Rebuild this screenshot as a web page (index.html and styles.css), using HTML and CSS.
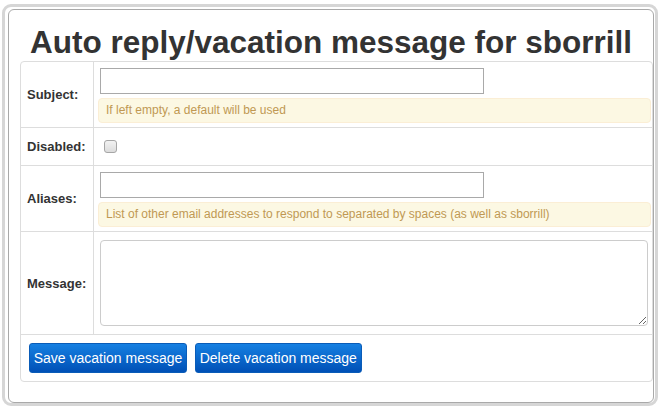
FILE: index.html
```html
<!DOCTYPE html>
<html>
<head>
<meta charset="utf-8">
<title>Auto reply/vacation message</title>
<link rel="stylesheet" href="styles.css">
</head>
<body>
<div class="frame">
  <div class="panel">
    <h1 class="title">Auto reply/vacation message for sborrill</h1>
    <table class="form">
      <tr>
        <td class="label">Subject:</td>
        <td class="field">
          <input type="text" class="text">
          <div class="help">If left empty, a default will be used</div>
        </td>
      </tr>
      <tr>
        <td class="label sep">Disabled:</td>
        <td class="field sep check"><input type="checkbox" class="box"></td>
      </tr>
      <tr>
        <td class="label sep">Aliases:</td>
        <td class="field sep">
          <input type="text" class="text">
          <div class="help">List of other email addresses to respond to separated by spaces (as well as sborrill)</div>
        </td>
      </tr>
      <tr>
        <td class="label sep">Message:</td>
        <td class="field sep msg"><textarea class="area"></textarea></td>
      </tr>
      <tr>
        <td colspan="2" class="actions sep">
          <button class="btn">Save vacation message</button>
          <button class="btn">Delete vacation message</button>
        </td>
      </tr>
    </table>
  </div>
</div>
</body>
</html>
```

FILE: styles.css
```css
html, body {
  margin: 0;
  padding: 0;
  background: #fff;
}
body {
  font-family: "Liberation Sans", Arial, sans-serif;
  color: #333;
}
.frame {
  box-sizing: border-box;
  margin: 4px 0 0 2px;
  width: 656px;
  height: 402px;
  border: 3px solid #d6d6d6;
  border-radius: 9px;
  padding: 2px 1px 0 3px;
}
.panel {
  box-sizing: border-box;
  width: 646px;
  height: 394px;
  border: 1px solid #a9a9a9;
  border-radius: 6px;
  padding-top: 14px;
}
.title {
  margin: 0;
  font-size: 31.5px;
  line-height: 37px;
  font-weight: bold;
  text-align: center;
  color: #333;
}
.form {
  margin-left: 11px;
  width: 633px;
  border-collapse: separate;
  border-spacing: 0;
  border: 1px solid #ddd;
  border-radius: 4px;
}
.form td {
  padding: 0;
}
.form td.sep {
  border-top: 1px solid #ddd;
}
.form td.label {
  box-sizing: border-box;
  width: 73px;
  padding-left: 6px;
  border-right: 1px solid #ddd;
  font-size: 13px;
  font-weight: bold;
  color: #333;
  vertical-align: middle;
}
.form td.field {
  padding: 6px 1px 4px 4px;
  vertical-align: top;
}
.form td.check {
  padding: 12px 4px 12px 4px;
}
.form td.msg {
  padding: 8px 4px 8px 4px;
}
.text {
  display: block;
  box-sizing: border-box;
  width: 384px;
  height: 26px;
  margin: 0 0 0 2px;
  border: 1px solid #a9a9a9;
  border-radius: 0;
  padding: 2px 4px;
  font-family: inherit;
  font-size: 13px;
}
.help {
  margin-top: 4px;
  border: 1px solid #fbeed5;
  border-radius: 4px;
  background: #fcf8e3;
  color: #c09853;
  font-size: 12px;
  line-height: 15px;
  padding: 4px 7px;
}
.box {
  -webkit-appearance: none;
  appearance: none;
  display: block;
  box-sizing: border-box;
  width: 13px;
  height: 13px;
  margin: 0 0 0 6px;
  border: 1px solid #a6a6a6;
  border-radius: 3px;
  background: linear-gradient(#f2f2f2, #dcdcdc);
}
.area {
  display: block;
  box-sizing: border-box;
  width: 548px;
  height: 86px;
  margin: 0 0 0 2px;
  border: 1px solid #ccc;
  border-radius: 4px;
  font-family: inherit;
  font-size: 13px;
}
.form td.actions {
  padding: 8px;
  font-size: 0;
}
.btn {
  box-sizing: border-box;
  height: 30px;
  margin: 0 8px 0 0;
  padding: 0 3.7px;
  border: 1px solid #0a5cb8;
  border-radius: 3px;
  background: linear-gradient(#1680e2, #0050b6);
  color: #fff;
  font-family: "Liberation Sans", Arial, sans-serif;
  font-size: 14px;
  vertical-align: top;
}
```
